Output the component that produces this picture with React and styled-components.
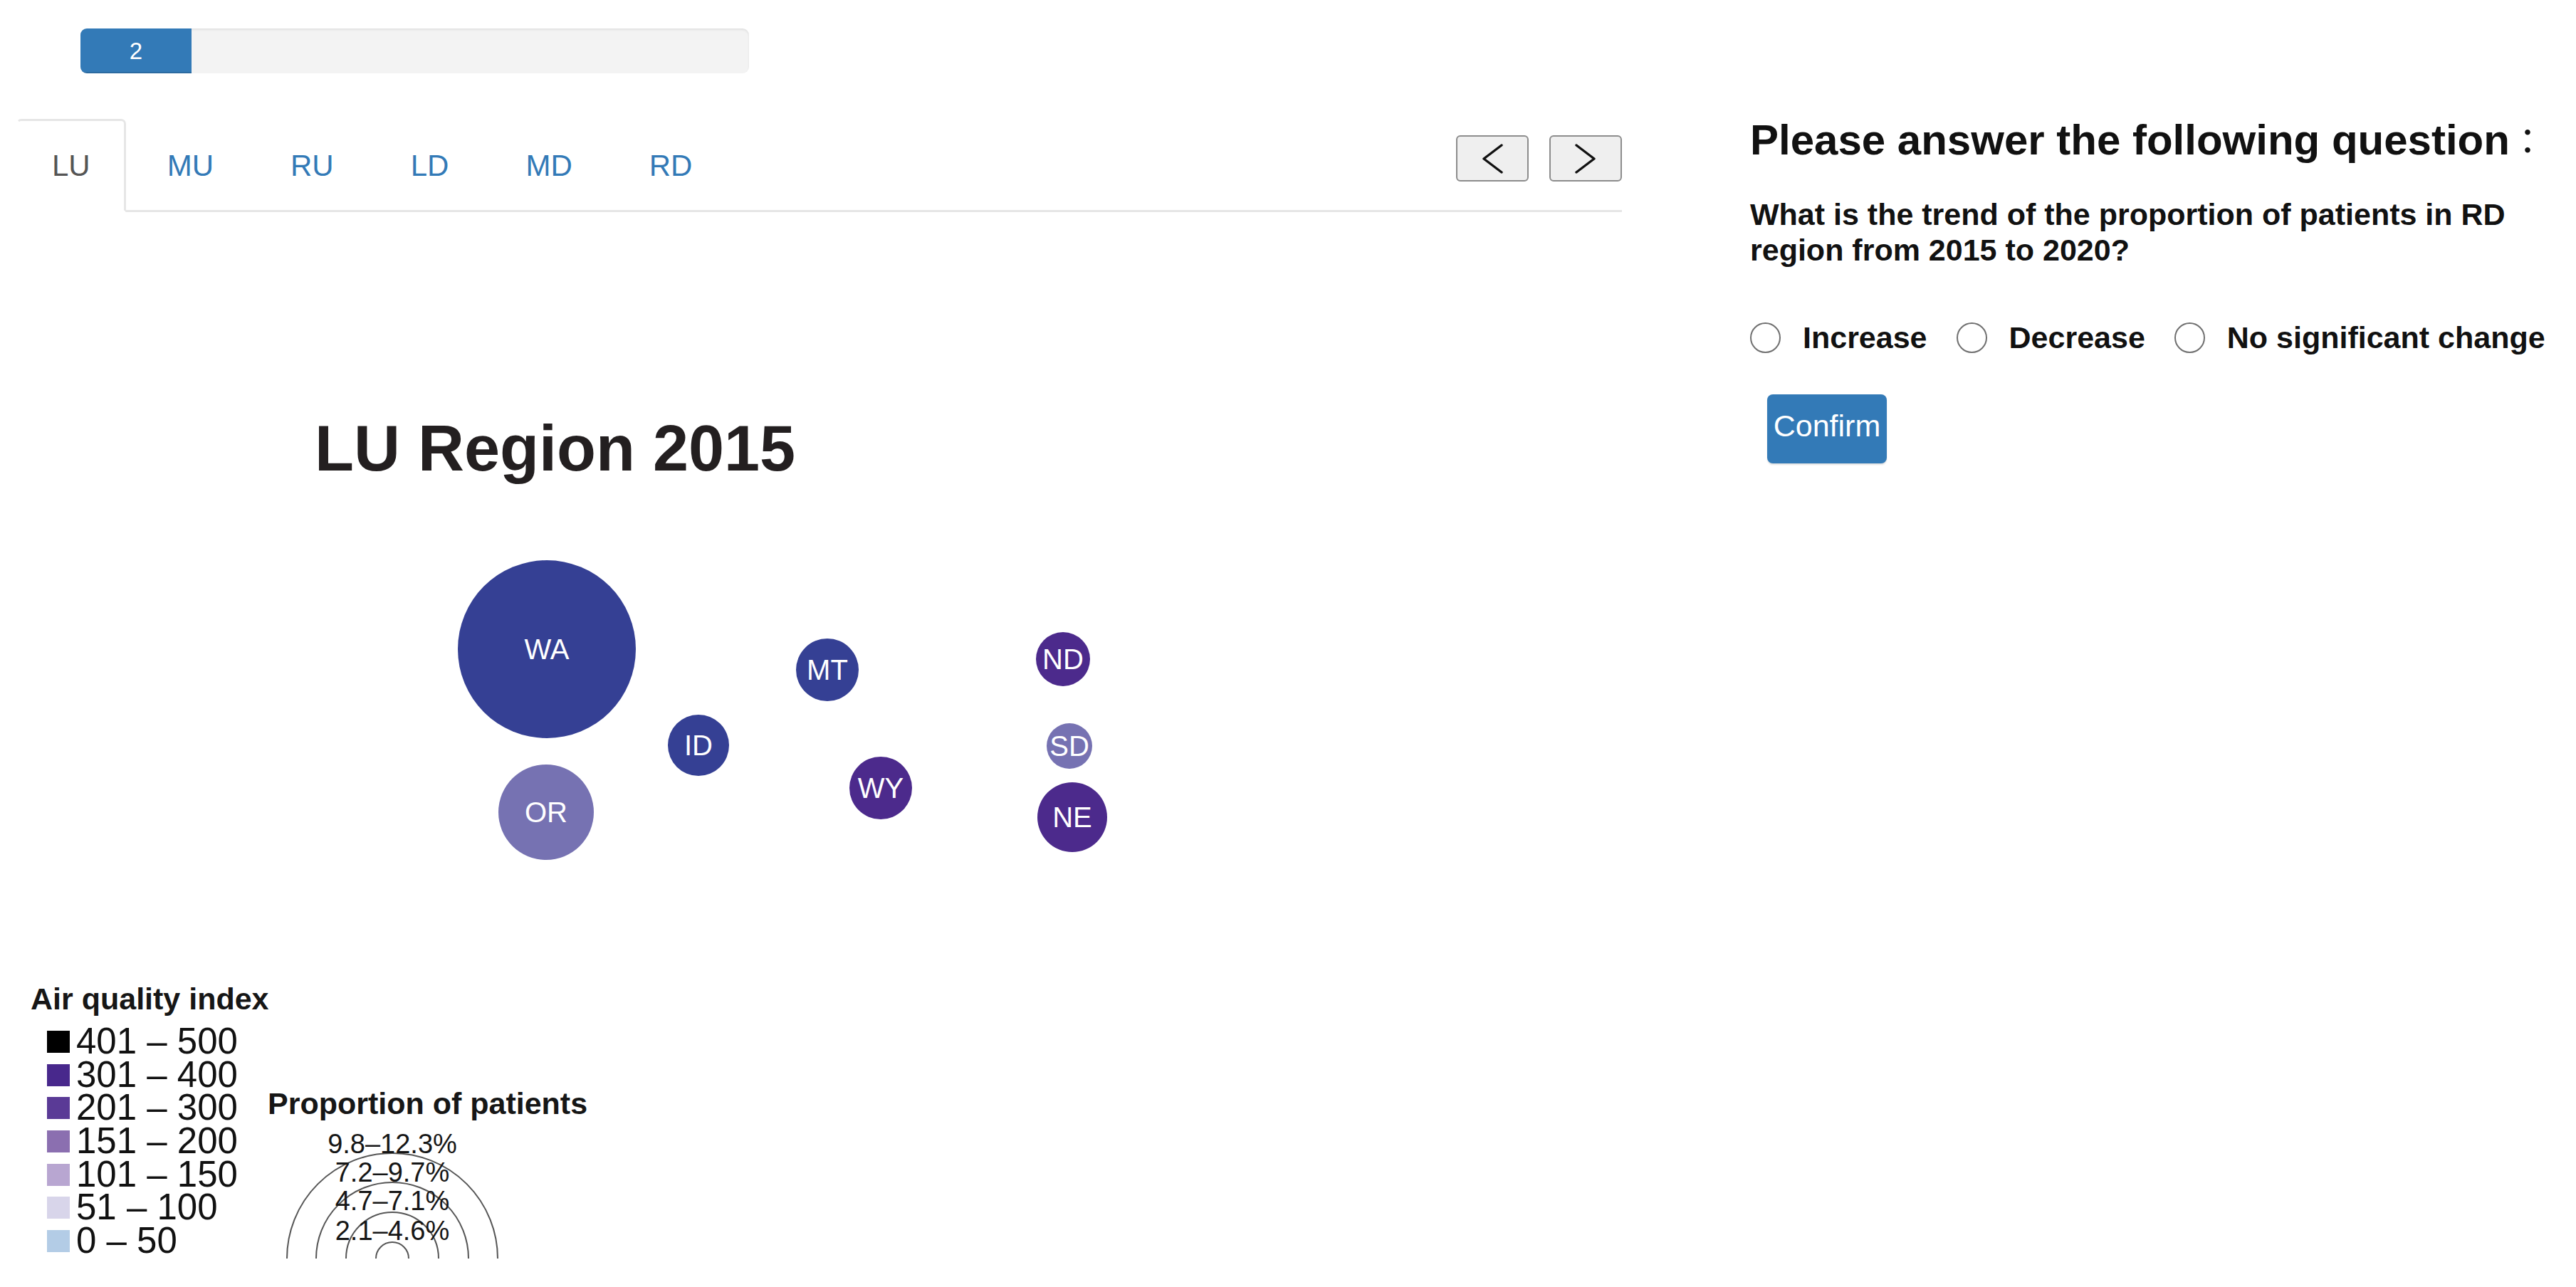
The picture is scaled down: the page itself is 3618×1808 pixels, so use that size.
import React from 'react'
import styled, { createGlobalStyle } from 'styled-components'

const GlobalStyle = createGlobalStyle`
  html, body {
    margin: 0;
    padding: 0;
    background: #ffffff;
  }
  body {
    font-family: "Liberation Sans", Arial, Helvetica, sans-serif;
    color: #111;
  }
`

const tabs = ['LU', 'MU', 'RU', 'LD', 'MD', 'RD']

const bubbles = [
  { id: 'WA', x: 768, y: 212, r: 125, color: '#354094' },
  { id: 'MT', x: 1162, y: 241, r: 44, color: '#354094' },
  { id: 'ND', x: 1493, y: 226, r: 38, color: '#4c2a8c' },
  { id: 'ID', x: 981, y: 347, r: 43, color: '#354094' },
  { id: 'SD', x: 1502, y: 348, r: 32, color: '#7672b2' },
  { id: 'WY', x: 1237, y: 407, r: 44, color: '#4c2a8c' },
  { id: 'OR', x: 767, y: 441, r: 67, color: '#7672b2' },
  { id: 'NE', x: 1506, y: 448, r: 49, color: '#4c2a8c' },
]

const scale = [
  { label: '401 – 500', color: '#000000' },
  { label: '301 – 400', color: '#48288c' },
  { label: '201 – 300', color: '#5a3a96' },
  { label: '151 – 200', color: '#8b6fb0' },
  { label: '101 – 150', color: '#b8a6d1' },
  { label: '51 – 100', color: '#d8d5ea' },
  { label: '0 – 50', color: '#b3cce6' },
]

const rings = [148, 107, 65, 23]

const ringLabels = [
  { text: '9.8–12.3%', y: 45.5 },
  { text: '7.2–9.7%', y: 85.5 },
  { text: '4.7–7.1%', y: 125.5 },
  { text: '2.1–4.6%', y: 167.5 },
]

const options = ['Increase', 'Decrease', 'No significant change']

export default function App() {
  return (
    <>
      <GlobalStyle />
      <Page>
        <Main>
          <ProgressTrack>
            <ProgressFill>2</ProgressFill>
          </ProgressTrack>

          <TabBar>
            {tabs.map((t, i) => (
              <Tab key={t} $active={i === 0}>{t}</Tab>
            ))}
            <NavGroup>
              <NavButton aria-label="previous">
                <Chevron viewBox="0 0 30 42">
                  <polyline points="28,2 3,21 28,40" />
                </Chevron>
              </NavButton>
              <NavButton aria-label="next">
                <Chevron viewBox="0 0 30 42">
                  <polyline points="2,2 27,21 2,40" />
                </Chevron>
              </NavButton>
            </NavGroup>
          </TabBar>

          <ChartTitle>LU Region 2015</ChartTitle>

          <BubbleChart width="1700" height="540" viewBox="0 0 1700 540">
            {bubbles.map(b => (
              <g key={b.id}>
                <circle cx={b.x} cy={b.y} r={b.r} fill={b.color} />
                <text
                  x={b.x}
                  y={b.y}
                  textAnchor="middle"
                  dominantBaseline="central"
                  fill="#ffffff"
                  fontSize="40"
                  fontFamily='"Liberation Sans", Arial, sans-serif'
                >
                  {b.id}
                </text>
              </g>
            ))}
          </BubbleChart>

          <Legend>
            <LegendTitle>Air quality index</LegendTitle>
            <LegendBody>
              <ScaleList>
                {scale.map(s => (
                  <ScaleRow key={s.label}>
                    <Swatch $color={s.color} />
                    <span>{s.label}</span>
                  </ScaleRow>
                ))}
              </ScaleList>
              <ProportionBlock>
                <LegendTitle>Proportion of patients</LegendTitle>
                <RingChart width="350" height="194" viewBox="0 0 350 194">
                  {rings.map(r => (
                    <circle key={r} cx="175" cy="194" r={r} fill="none" stroke="#555" strokeWidth="2" />
                  ))}
                  {ringLabels.map(l => (
                    <text
                      key={l.text}
                      x="175"
                      y={l.y}
                      textAnchor="middle"
                      fontSize="38"
                      fill="#161616"
                      fontFamily='"Liberation Sans", Arial, sans-serif'
                    >
                      {l.text}
                    </text>
                  ))}
                </RingChart>
              </ProportionBlock>
            </LegendBody>
          </Legend>
        </Main>

        <Side>
          <Heading>
            Please answer the following question<Colon>：</Colon>
          </Heading>
          <Question>What is the trend of the proportion of patients in RD region from 2015 to 2020?</Question>
          <Options>
            {options.map(o => (
              <Option key={o}>
                <RadioDot />
                <span>{o}</span>
              </Option>
            ))}
          </Options>
          <ConfirmButton>Confirm</ConfirmButton>
        </Side>
      </Page>
    </>
  )
}

const Page = styled.div`
  display: grid;
  grid-template-columns: 2458px 1fr;
  width: 3618px;
  min-height: 1808px;
`

const Main = styled.div`
  display: flex;
  flex-direction: column;
  align-items: flex-start;
`

const ProgressTrack = styled.div`
  margin: 40px 0 0 113px;
  width: 939px;
  height: 63px;
  border-radius: 9px;
  background: #f3f3f3;
  box-shadow: inset 0 2px 3px rgba(0, 0, 0, 0.08);
  overflow: hidden;
  display: flex;
`

const ProgressFill = styled.div`
  width: 156px;
  height: 100%;
  background: #337ab7;
  color: #fff;
  font-size: 33px;
  display: flex;
  align-items: center;
  justify-content: center;
  box-shadow: inset 0 -2px 0 rgba(0, 0, 0, 0.12);
`

const TabBar = styled.div`
  display: flex;
  align-items: flex-start;
  margin: 64px 0 0 23px;
  width: 2255px;
  border-bottom: 3px solid #e6e6e6;
`

const Tab = styled.div`
  font-size: 42px;
  line-height: 60px;
  padding: 33px 47px 32px;
  margin: 0 8px -3px 0;
  border: 3px solid transparent;
  border-radius: 7px 7px 0 0;
  color: ${p => (p.$active ? '#555555' : '#337ab7')};
  background: ${p => (p.$active ? '#ffffff' : 'transparent')};
  border-color: ${p => (p.$active ? '#e6e6e6 #e6e6e6 transparent' : 'transparent')};
  cursor: pointer;

  &:first-child {
    border-left-color: transparent;
  }
`

const NavGroup = styled.div`
  margin: 23px 0 0 auto;
  display: flex;
  gap: 29px;
`

const NavButton = styled.button`
  width: 102px;
  height: 65px;
  box-sizing: border-box;
  border: 2px solid #8c8c8c;
  border-radius: 6px;
  background: #efefef;
  padding: 0;
  display: flex;
  align-items: center;
  justify-content: center;
`

const Chevron = styled.svg`
  width: 30px;
  height: 42px;
  fill: none;
  stroke: #111;
  stroke-width: 3.4;
  stroke-linecap: round;
  stroke-linejoin: round;
`

const ChartTitle = styled.div`
  margin: 287px 0 0 442px;
  font-size: 90px;
  line-height: 1;
  font-weight: 700;
  color: #231f20;
`

const BubbleChart = styled.svg`
  display: block;
  margin-top: 25px;
`

const Legend = styled.div`
  margin: 139px 0 0 43px;
`

const LegendTitle = styled.div`
  font-size: 43px;
  line-height: 48px;
  font-weight: 700;
  color: #161616;
  white-space: nowrap;
`

const LegendBody = styled.div`
  display: flex;
  align-items: flex-start;
  margin: 13px 0 0 23px;
`

const ScaleList = styled.div`
  width: 310px;
  display: flex;
  flex-direction: column;
`

const ScaleRow = styled.div`
  display: flex;
  align-items: center;
  gap: 9px;
  height: 46.7px;
  font-size: 51px;
  line-height: 46.7px;
  color: #111;
  white-space: nowrap;
`

const Swatch = styled.div`
  width: 32px;
  height: 31px;
  flex: none;
  background: ${p => p.$color};
`

const ProportionBlock = styled.div`
  margin-top: 86px;
  display: flex;
  flex-direction: column;
`

const RingChart = styled.svg`
  display: block;
`

const Side = styled.div`
  padding-top: 161px;
  display: flex;
  flex-direction: column;
  align-items: flex-start;
`

const Heading = styled.div`
  font-family: "Liberation Sans", Arial, "Noto Sans CJK TC", sans-serif;
  font-size: 60px;
  line-height: 72px;
  font-weight: 700;
  color: #111;
  white-space: nowrap;
`

const Colon = styled.span`
  font-weight: 400;
  font-size: 50px;
`

const Question = styled.div`
  margin-top: 40px;
  max-width: 1100px;
  font-size: 43px;
  line-height: 50px;
  font-weight: 700;
  color: #111;
`

const Options = styled.div`
  margin-top: 73px;
  display: flex;
  align-items: center;
  height: 50px;
`

const Option = styled.label`
  display: flex;
  align-items: center;
  gap: 31px;
  margin-right: 41px;
  font-size: 43px;
  font-weight: 700;
  color: #111;
  white-space: nowrap;
`

const RadioDot = styled.span`
  width: 43px;
  height: 43px;
  box-sizing: border-box;
  border: 2px solid #707070;
  border-radius: 50%;
  background: #fff;
  flex: none;
`

const ConfirmButton = styled.button`
  margin: 55px 0 0 24px;
  width: 168px;
  height: 97px;
  padding: 0 0 8px;
  border: none;
  border-radius: 8px;
  background: #337ab7;
  color: #fff;
  font-family: "Liberation Sans", Arial, sans-serif;
  font-size: 43px;
  box-shadow: 0 2px 2px rgba(0, 0, 0, 0.12);
`
